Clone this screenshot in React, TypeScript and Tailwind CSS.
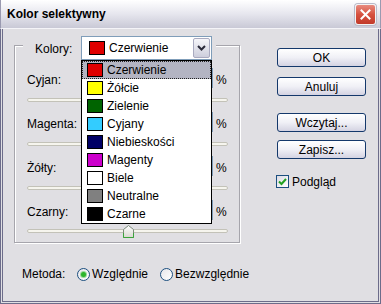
import React from "react";

const items = [
  { name: "Czerwienie", sw: "bg-[#e00000]" },
  { name: "Żółcie", sw: "bg-[#ffff00]" },
  { name: "Zielenie", sw: "bg-[#006400]" },
  { name: "Cyjany", sw: "bg-[#33ccff]" },
  { name: "Niebieskości", sw: "bg-[#000066]" },
  { name: "Magenty", sw: "bg-[#cc00cc]" },
  { name: "Biele", sw: "bg-[#ffffff]" },
  { name: "Neutralne", sw: "bg-[#808080]" },
  { name: "Czarne", sw: "bg-[#000000]" },
];

function Button({ label, cls }: { label: string; cls: string }) {
  return (
    <div
      className={
        "w-[89px] h-[19px] rounded-[3px] border border-[#14386b] bg-gradient-to-b from-[#ffffff] via-[#f0f0f6] to-[#d4d3e2] flex items-center justify-center text-[12px] text-black " +
        cls
      }
    >
      {label}
    </div>
  );
}

function Track({ h, thumb }: { h: string; thumb?: boolean }) {
  return (
    <div className={"relative flex items-center " + h}>
      <div className="w-[201px] h-[4px] rounded-full border border-[#c3c2b8] bg-[#f6f5ee]" />
      {thumb && (
        <svg className="absolute left-[96px] top-[5px]" width="11" height="13" viewBox="0 0 11 13">
          <defs>
            <linearGradient id="tg" x1="0" y1="0" x2="0" y2="1">
              <stop offset="0" stopColor="#ffffff" />
              <stop offset="1" stopColor="#d8d8d0" />
            </linearGradient>
          </defs>
          <path d="M0.5 4.5 L5.5 0.5 L10.5 4.5 V12.5 H0.5 Z" fill="url(#tg)" stroke="#7a8a7a" />
          <path d="M0.5 8 V12.5 H10.5 V8" fill="none" stroke="#3aa53a" />
        </svg>
      )}
    </div>
  );
}

function Row({ label }: { label: string }) {
  return (
    <div className="flex items-center h-[20px]">
      <span className="w-[54px] shrink-0 pt-[4px]">{label}</span>
      <div className="w-[132px] h-[20px] shrink-0 border border-[#7f9db9] bg-white" />
      <span className="ml-[3px] pt-[4px]">%</span>
    </div>
  );
}

export default function App() {
  return (
    <div
      className="w-[381px] h-[304px] flex flex-col bg-[#e0dfe3] text-[12px] text-black overflow-hidden"
      style={{ fontFamily: '"Liberation Sans", Arial, sans-serif' }}
    >
      {/* title bar */}
      <div className="h-[29px] shrink-0 flex items-center justify-between pl-[6px] pr-[4px] bg-gradient-to-b from-[#ffffff] via-[#e6e6ee] to-[#c9c9d6] border-b border-[#f4f4f8] border-x border-x-[#9a9ab0]">
        <span className="font-bold text-[12px] text-black">Kolor selektywny</span>
        <div className="w-[21px] h-[21px] rounded-[3px] border border-[#f3f3f3] bg-gradient-to-b from-[#e88a7e] via-[#d6503f] to-[#c23a2a] flex items-center justify-center shadow-[0_0_0_1px_#b9b9c8]">
          <svg width="11" height="11" viewBox="0 0 11 11">
            <path d="M1.5 1.5 L9.5 9.5 M9.5 1.5 L1.5 9.5" stroke="#ffffff" strokeWidth="2" strokeLinecap="square" />
          </svg>
        </div>
      </div>

      {/* body */}
      <div className="flex-1 flex items-start pl-[11px] pt-[16px] border-x-[3px] border-b-[3px] border-double border-[#6c6c8a]">
        {/* left column */}
        <div className="w-[226px] shrink-0 flex flex-col">
          <div className="w-[226px] h-[198px] border border-[#a6a5ac] shadow-[inset_1px_1px_0_#ffffff,1px_1px_0_#ffffff] pl-[12px] flex flex-col">
            {/* caption */}
            <div className="-mt-[10px] -ml-[4px] w-[193px] h-[24px] flex items-center bg-[#e0dfe3] pl-[12px]">
              <span className="w-[46px] shrink-0 pt-[2px]">Kolory:</span>
              <div className="relative w-[131px] h-[24px] shrink-0 border border-[#7f9db9] bg-white flex items-center pl-[7px]">
                <span className="w-[16px] h-[14px] border border-black bg-[#e00000]" />
                <span className="ml-[4px]">Czerwienie</span>
                <div className="ml-auto mr-[1px] w-[17px] h-[20px] rounded-[2px] border border-[#a9aac0] bg-gradient-to-b from-[#f6f6fa] to-[#cdcedc] flex items-center justify-center">
                  <svg width="9" height="6" viewBox="0 0 9 6">
                    <path d="M1 1 L4.5 4.5 L8 1" stroke="#2a2a3a" strokeWidth="2" fill="none" />
                  </svg>
                </div>
                {/* dropdown list */}
                <div className="absolute left-[-1px] top-[23px] w-[131px] border border-black bg-white flex flex-col z-10">
                  {items.map((it, i) => (
                    <div
                      key={it.name}
                      className={
                        "h-[18px] flex items-center pl-[4px] border " +
                        (i === 0 ? "bg-[#b3b4c2] border-dotted border-[#222]" : "border-transparent")
                      }
                    >
                      <span className={"w-[16px] h-[14px] border border-black " + it.sw} />
                      <span className="ml-[4px]">{it.name}</span>
                    </div>
                  ))}
                </div>
              </div>
            </div>
            <div className="mt-[8px]" />
            <Row label="Cyjan:" />
            <Track h="h-[24px]" />
            <Row label="Magenta:" />
            <Track h="h-[24px]" />
            <Row label="Żółty:" />
            <Track h="h-[24px]" />
            <Row label="Czarny:" />
            <Track h="h-[22px]" thumb />
          </div>

          {/* Metoda */}
          <div className="mt-[23px] ml-[8px] h-[16px] w-max flex items-center whitespace-nowrap">
            <span className="w-[55px] shrink-0">Metoda:</span>
            <span className="w-[13px] h-[13px] shrink-0 rounded-full border border-[#1c4f80] bg-gradient-to-br from-[#e6e6ea] to-[#ffffff] flex items-center justify-center">
              <span className="w-[5px] h-[5px] rounded-full bg-[#2cb52c] shadow-[0_0_0_1px_#9ad89a]" />
            </span>
            <span className="ml-[2px]">Względnie</span>
            <span className="ml-[12px] w-[13px] h-[13px] shrink-0 rounded-full border border-[#1c4f80] bg-gradient-to-br from-[#e6e6ea] to-[#ffffff]" />
            <span className="ml-[2px]">Bezwzględnie</span>
          </div>
        </div>

        {/* right column */}
        <div className="ml-[37px] mt-[3px] flex flex-col">
          <Button label="OK" cls="" />
          <Button label="Anuluj" cls="mt-[10px]" />
          <Button label="Wczytaj..." cls="mt-[17px]" />
          <Button label="Zapisz..." cls="mt-[8px]" />
          <div className="mt-[16px] -ml-[1px] flex items-center h-[13px]">
            <span className="w-[13px] h-[13px] border border-[#1c4f80] bg-gradient-to-br from-[#dcdce4] to-[#ffffff] flex items-center justify-center">
              <svg width="9" height="8" viewBox="0 0 9 8">
                <path d="M1 3.5 L3.5 6 L8 1" stroke="#21a121" strokeWidth="2" fill="none" />
              </svg>
            </span>
            <span className="ml-[3px]">Podgląd</span>
          </div>
        </div>
      </div>
    </div>
  );
}
